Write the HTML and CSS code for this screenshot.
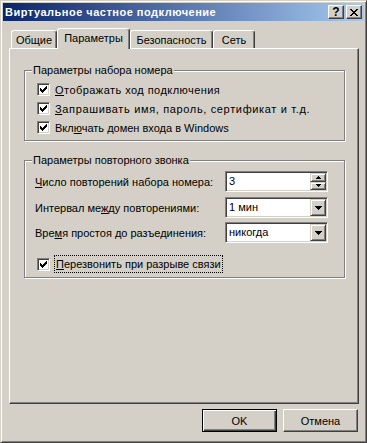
FILE: index.html
```html
<!DOCTYPE html>
<html lang="ru">
<head>
    <meta charset="UTF-8">
    <title>Виртуальное частное подключение</title>
    <link rel="stylesheet" href="styles.css">
</head>
<body>
    <div class="window">
        <div class="titlebar">
            <span class="title">Виртуальное частное подключение</span>
            <div class="caption-buttons">
                <span class="cap-btn help">?</span>
                <span class="cap-btn close">
                    <svg width="8" height="7" viewBox="0 0 8 7" shape-rendering="crispEdges"><path d="M0 0h2v1H0zM6 0h2v1H6zM1 1h2v1H1zM5 1h2v1H5zM2 2h4v1H2zM3 3h2v1H3zM2 4h4v1H2zM1 5h2v1H1zM5 5h2v1H5zM0 6h2v1H0zM6 6h2v1H6z" fill="#000"/></svg>
                </span>
            </div>
        </div>

        <div class="dialog">
            <!-- вкладки -->
            <div class="tabs">
                <div class="tab tab-general">Общие</div>
                <div class="tab tab-params active">Параметры</div>
                <div class="tab tab-security">Безопасность</div>
                <div class="tab tab-net">Сеть</div>
            </div>

            <div class="panel">
                <div class="group group-dial">
                    <div class="group-title">Параметры набора номера</div>
                    <div class="rows">
                        <div class="check-row">
                            <span class="checkbox"><svg width="7" height="7" viewBox="0 0 7 7" shape-rendering="crispEdges"><path d="M0 2h1v3H0zM1 3h1v3H1zM2 4h1v3H2zM3 3h1v3H3zM4 2h1v3H4zM5 1h1v3H5zM6 0h1v3H6z" fill="#000"/></svg></span>
                            <span class="check-label wide-1"><u>О</u>тображать ход подключения</span>
                        </div>
                        <div class="check-row">
                            <span class="checkbox"><svg width="7" height="7" viewBox="0 0 7 7" shape-rendering="crispEdges"><path d="M0 2h1v3H0zM1 3h1v3H1zM2 4h1v3H2zM3 3h1v3H3zM4 2h1v3H4zM5 1h1v3H5zM6 0h1v3H6z" fill="#000"/></svg></span>
                            <span class="check-label wide-2"><u>З</u>апрашивать имя, пароль, сертификат и т.д.</span>
                        </div>
                        <div class="check-row">
                            <span class="checkbox"><svg width="7" height="7" viewBox="0 0 7 7" shape-rendering="crispEdges"><path d="M0 2h1v3H0zM1 3h1v3H1zM2 4h1v3H2zM3 3h1v3H3zM4 2h1v3H4zM5 1h1v3H5zM6 0h1v3H6z" fill="#000"/></svg></span>
                            <span class="check-label">Вкл<u>ю</u>чать домен входа в Windows</span>
                        </div>
                    </div>
                </div>

                <div class="group group-redial">
                    <div class="group-title">Параметры повторного звонка</div>
                    <div class="rows">
                        <div class="field-row">
                            <span class="field-label"><u>Ч</u>исло повторений набора номера:</span>
                            <div class="edit">
                                <span class="value">3</span>
                                <span class="spinner">
                                    <span class="spin-btn"><svg width="5" height="3" viewBox="0 0 5 3" shape-rendering="crispEdges"><path d="M2 0h1v1H2zM1 1h3v1H1zM0 2h5v1H0z" fill="#000"/></svg></span>
                                    <span class="spin-btn"><svg width="5" height="3" viewBox="0 0 5 3" shape-rendering="crispEdges"><path d="M0 0h5v1H0zM1 1h3v1H1zM2 2h1v1H2z" fill="#000"/></svg></span>
                                </span>
                            </div>
                        </div>
                        <div class="field-row row-interval">
                            <span class="field-label">Интервал ме<u>ж</u>ду повторениями:</span>
                            <div class="edit">
                                <span class="value">1 мин</span>
                                <span class="drop-btn"><svg width="7" height="4" viewBox="0 0 7 4" shape-rendering="crispEdges"><path d="M0 0h7v1H0zM1 1h5v1H1zM2 2h3v1H2zM3 3h1v1H3z" fill="#000"/></svg></span>
                            </div>
                        </div>
                        <div class="field-row row-idle">
                            <span class="field-label">Вре<u>м</u>я простоя до разъединения:</span>
                            <div class="edit">
                                <span class="value">никогда</span>
                                <span class="drop-btn"><svg width="7" height="4" viewBox="0 0 7 4" shape-rendering="crispEdges"><path d="M0 0h7v1H0zM1 1h5v1H1zM2 2h3v1H2zM3 3h1v1H3z" fill="#000"/></svg></span>
                            </div>
                        </div>
                        <div class="check-row row-redial">
                            <span class="checkbox"><svg width="7" height="7" viewBox="0 0 7 7" shape-rendering="crispEdges"><path d="M0 2h1v3H0zM1 3h1v3H1zM2 4h1v3H2zM3 3h1v3H3zM4 2h1v3H4zM5 1h1v3H5zM6 0h1v3H6z" fill="#000"/></svg></span>
                            <span class="check-label focus"><u>П</u>ерезвонить при разрыве связи</span>
                        </div>
                    </div>
                </div>
            </div>

            <div class="buttons">
                <button class="btn default">OK</button>
                <button class="btn">Отмена</button>
            </div>
        </div>
    </div>
</body>
</html>
```

FILE: styles.css
```css
body {
    margin: 0;
}
.window {
    width: 367px;
    height: 443px;
    box-sizing: border-box;
    padding: 2px;
    background-color: #d4d0c8;
    border: 1px solid;
    border-color: #d4d0c8 #404040 #404040 #d4d0c8;
    box-shadow: inset 1px 1px #fff, inset -1px -1px #808080;
    font: 11px "Liberation Sans", Arial, sans-serif;
    color: #000;
}
.titlebar {
    height: 18px;
    display: flex;
    align-items: center;
    justify-content: space-between;
    padding: 0 2px;
    background: linear-gradient(to right, #0a246a, #a6caf0);
}
.title {
    color: #fff;
    font-weight: bold;
    letter-spacing: 0.5px;
}
.caption-buttons {
    display: flex;
    gap: 2px;
}
.cap-btn {
    width: 16px;
    height: 14px;
    box-sizing: border-box;
    display: flex;
    align-items: center;
    justify-content: center;
    background-color: #d4d0c8;
    border: 1px solid;
    border-color: #fff #404040 #404040 #fff;
    box-shadow: inset -1px -1px #808080;
}
.help {
    font-weight: bold;
    font-size: 12px;
    line-height: 12px;
}
.dialog {
    padding: 7px 5px 0 6px;
}

/* вкладки */
.tabs {
    display: flex;
    align-items: flex-end;
    height: 20px;
    padding-left: 2px;
    position: relative;
    z-index: 1;
}
.tab {
    height: 18px;
    box-sizing: border-box;
    display: flex;
    align-items: center;
    justify-content: center;
    border: 1px solid;
    border-bottom: 0;
    border-color: #fff #404040 transparent #fff;
    border-radius: 3px 3px 0 0;
    box-shadow: inset -1px 0 #808080;
    padding-top: 1px;
}
.tab.active {
    height: 21px;
    margin-bottom: -1px;
    background-color: #d4d0c8;
    padding-top: 0;
    padding-bottom: 2px;
}
.tab-general { width: 46px; }
.tab-params { width: 73px; }
.tab-security { width: 83px; }
.tab-net { width: 42px; }

.panel {
    height: 356px;
    box-sizing: border-box;
    border: 1px solid;
    border-color: #fff #404040 #404040 #fff;
    box-shadow: inset -1px -1px #808080;
    padding: 21px 13px 0 14px;
}

/* рамки групп */
.group {
    border: 1px solid #808080;
    box-shadow: inset 1px 1px #fff, 1px 1px #fff;
}
.group-title {
    width: fit-content;
    margin: -7px 0 0 7px;
    padding: 0 1px;
    line-height: 13px;
    background-color: #d4d0c8;
}
.group-dial .rows {
    padding: 3px 0 3px 12px;
}
.group-redial {
    margin-top: 19px;
}
.group-redial .rows {
    padding: 4px 0 4px 10px;
}
.check-row {
    height: 19px;
    display: flex;
    align-items: center;
    gap: 5px;
}
.wide-1 { letter-spacing: 0.45px; }
.wide-2 { letter-spacing: 0.65px; }
.checkbox {
    width: 13px;
    height: 13px;
    box-sizing: border-box;
    flex-shrink: 0;
    display: flex;
    align-items: center;
    justify-content: center;
    background-color: #fff;
    border: 1px solid;
    border-color: #808080 #fff #fff #808080;
    box-shadow: inset 1px 1px #404040, inset -1px -1px #d4d0c8;
}
.field-row {
    height: 21px;
    display: flex;
    align-items: center;
}
.row-interval { margin-top: 5px; }
.row-idle { margin-top: 4px; }
.field-label {
    width: 190px;
}
.edit {
    width: 103px;
    height: 21px;
    box-sizing: border-box;
    display: flex;
    background-color: #fff;
    border: 1px solid;
    border-color: #808080 #fff #fff #808080;
    box-shadow: inset 1px 1px #404040, inset -1px -1px #d4d0c8;
    padding: 1px;
}
.value {
    flex: 1;
    padding-left: 2px;
    line-height: 17px;
}
.drop-btn,
.spin-btn {
    width: 16px;
    box-sizing: border-box;
    display: flex;
    align-items: center;
    justify-content: center;
    background-color: #d4d0c8;
    border: 1px solid;
    border-color: #d4d0c8 #404040 #404040 #d4d0c8;
    box-shadow: inset 1px 1px #fff, inset -1px -1px #808080;
}
.spinner {
    display: flex;
    flex-direction: column;
}
.spin-btn {
    flex: 1;
}
.row-redial {
    height: 18px;
    margin-top: 12px;
    padding-left: 2px;
    gap: 4px;
}
.check-label.focus {
    border: 1px dotted #000;
    padding: 0 1px;
    line-height: 16px;
}

/* кнопки внизу */
.buttons {
    display: flex;
    justify-content: flex-end;
    gap: 6px;
    margin-top: 5px;
    padding-right: 1px;
}
.btn {
    width: 75px;
    height: 23px;
    padding: 0;
    font: inherit;
    color: #000;
    background-color: #d4d0c8;
    border: 1px solid;
    border-color: #fff #404040 #404040 #fff;
    box-shadow: inset -1px -1px #808080;
}
.btn.default {
    border-color: #000;
    box-shadow: inset 1px 1px #fff, inset -1px -1px #404040, inset -2px -2px #808080;
}
```
